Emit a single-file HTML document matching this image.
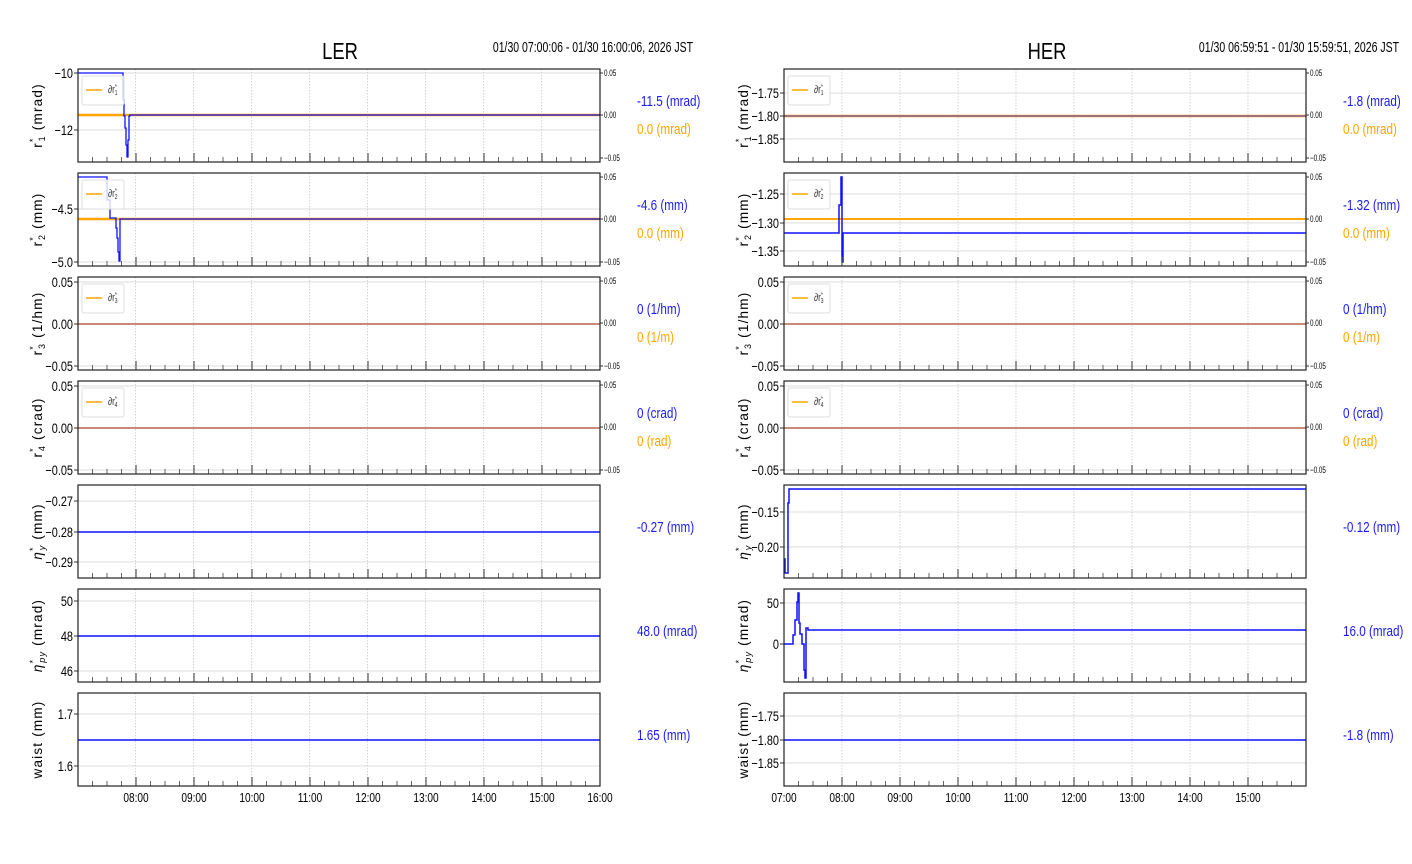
<!DOCTYPE html>
<html><head><meta charset="utf-8"><style>
html,body{margin:0;padding:0;background:#fff;width:1412px;height:864px;overflow:hidden}
svg text{font-family:"Liberation Sans Narrow","Liberation Sans",sans-serif}
</style></head><body>
<svg id="s" width="1412" height="864" xmlns="http://www.w3.org/2000/svg">
<text x="340" y="59" font-size="23" text-anchor="middle" transform="translate(340 0) scale(0.8 1) translate(-340 0)">LER</text>
<text x="1047" y="59" font-size="23" text-anchor="middle" transform="translate(1047 0) scale(0.8 1) translate(-1047 0)">HER</text>
<text x="693" y="52" font-size="15" text-anchor="end" transform="translate(693 0) scale(0.7 1) translate(-693 0)">01/30 07:00:06 - 01/30 16:00:06, 2026 JST</text>
<text x="1399" y="52" font-size="15" text-anchor="end" transform="translate(1399 0) scale(0.7 1) translate(-1399 0)">01/30 06:59:51 - 01/30 15:59:51, 2026 JST</text>
</svg>
<script>
const s=document.getElementById('s');
let h='';
const H=93,W=522;
function T(x,y,t,sz,anc,col,sc){sc=sc||0.78;return `<text x="${x}" y="${y}" font-size="${sz}" fill="${col||'#000'}" text-anchor="${anc||'start'}" transform="translate(${x} 0) scale(${sc} 1) translate(${-x} 0)">${t}</text>`;}
function panel(x0,y0,yt,left,rightAx,lines,legend,ylab,vals){
  const x1=x0+W,y1=y0+H;
  for(let k=1;k<=9;k++){const gx=x0+58*k-(left?0.5:0);if(gx<x1-1)h+=`<line x1="${gx}" y1="${y0}" x2="${gx}" y2="${y1}" stroke="#c8c8c8" stroke-width="0.8" stroke-dasharray="1.5,1.5"/>`;}
  yt.forEach(([y,l])=>{h+=`<line x1="${x0}" y1="${y}" x2="${x1}" y2="${y}" stroke="#d0d0d0" stroke-width="0.8"/>`;h+=`<line x1="${x0}" y1="${y}" x2="${x0-4}" y2="${y}" stroke="#333"/>`;h+=T(x0-5,y+5,l,14,'end');});
  lines.forEach(([d,c,w])=>{h+=`<path d="${d}" fill="none" stroke="${c}" stroke-width="${w||1.5}"/>`;});
  for(let k=1;k<36;k++){const tx=x0+14.5*k;const maj=k%4==0;h+=`<line x1="${tx}" y1="${y1}" x2="${tx}" y2="${y1-(maj?9:5)}" stroke="#555" stroke-width="${maj?1.2:0.9}"/>`;}
  h+=`<rect x="${x0}" y="${y0}" width="${W}" height="${H}" fill="none" stroke="#222" stroke-width="1.2"/>`;
  if(rightAx){[[y0+4,'0.05'],[y0+46,'0.00'],[y0+89,'\u22120.05']].forEach(([y,l])=>{h+=`<line x1="${x1}" y1="${y}" x2="${x1+3}" y2="${y}" stroke="#333"/>`;h+=T(x1+4,y+3,l,9,'start','#000',0.7);});}
  if(legend){h+=`<rect x="${x0+4}" y="${y0+7}" width="42" height="29" rx="2" fill="#fff" fill-opacity="0.8" stroke="#ddd"/><line x1="${x0+8}" y1="${y0+21}" x2="${x0+24}" y2="${y0+21}" stroke="orange" stroke-width="1.5"/>`;h+=T(x0+30,y0+24,legend,11,'start','#333',0.75);}
  const cy=y0+H/2;
  h+=`<text x="0" y="0" font-size="13.5" text-anchor="middle" letter-spacing="1.2" transform="translate(${x0-36} ${cy}) rotate(-90)">${ylab}</text>`;
  const lx=x1+37;
  if(vals.length==2){h+=T(lx,y0+37,vals[0],15,'start','#1a1aff');h+=T(lx,y0+65,vals[1],15,'start','#ffa500');}
  else h+=T(lx,y0+47,vals[0],15,'start','#1a1aff');
}
const L=78,R=784,B='#1010ff',O='orange';
function yl(base,sub,unit,ital){return `<tspan ${ital?'font-style="italic"':''}>${base}</tspan><tspan font-size="9" dy="-6">*</tspan><tspan font-size="9" dy="9" dx="-4" ${ital?'font-style="italic"':''}>${sub}</tspan><tspan dy="-3">  (${unit})</tspan>`;}
function lg(n){return `∂r<tspan font-size="7" dy="-4">*</tspan><tspan font-size="7" dy="6" dx="-3">${n}</tspan>`;}
panel(L,69,[[73,'\u221210'],[130,'\u221212']],1,1,[[`M78,115H600`,O,2.5],[`M78,73H123V100H124V116H125V128H126V145H127V157H128V140H129V116H130V115H600`,B,1.3]],lg(1),yl('r','1','mrad'),['-11.5 (mrad)','0.0 (mrad)']);
panel(L,173,[[209,'\u22124.5'],[262,'\u22125.0']],1,1,[[`M78,219H600`,O,2.5],[`M78,177H107V200H110V218H116V228H117V238H118V252H119V261H120V219H600`,B,1.3]],lg(2),yl('r','2','mm'),['-4.6 (mm)','0.0 (mm)']);
panel(L,277,[[282,'0.05'],[324,'0.00'],[366,'\u22120.05']],1,1,[[`M78,324H600`,'#c98a7a',2]],lg(3),yl('r','3','1/hm'),['0 (1/hm)','0 (1/m)']);
panel(L,381,[[386,'0.05'],[428,'0.00'],[470,'\u22120.05']],1,1,[[`M78,428H600`,'#c98a7a',2]],lg(4),yl('r','4','crad'),['0 (crad)','0 (rad)']);
panel(L,485,[[501,'\u22120.27'],[532,'\u22120.28'],[562,'\u22120.29']],1,0,[[`M78,532H600`,B,1.5]],null,yl('η','y','mm',1),['-0.27 (mm)']);
panel(L,589,[[601,'50'],[636,'48'],[671,'46']],1,0,[[`M78,636H600`,B,1.5]],null,yl('η','py','mrad',1),['48.0 (mrad)']);
panel(L,693,[[714,'1.7'],[766,'1.6']],1,0,[[`M78,740H600`,B,1.5]],null,'waist (mm)',['1.65 (mm)']);
panel(R,69,[[93,'\u22121.75'],[116,'\u22121.80'],[139,'\u22121.85']],0,1,[[`M784,116H1306`,O,2.5],[`M784,116H1306`,'#4040ff',1]],lg(1),yl('r','1','mrad'),['-1.8 (mrad)','0.0 (mrad)']);
panel(R,173,[[194,'\u22121.25'],[223,'\u22121.30'],[251,'\u22121.35']],0,1,[[`M784,219H1306`,O,2],[`M784,233H839V205H841V177H842V262H843V233H1306`,B,1.5]],lg(2),yl('r','2','mm'),['-1.32 (mm)','0.0 (mm)']);
panel(R,277,[[282,'0.05'],[324,'0.00'],[366,'\u22120.05']],0,1,[[`M784,324H1306`,'#c98a7a',2]],lg(3),yl('r','3','1/hm'),['0 (1/hm)','0 (1/m)']);
panel(R,381,[[386,'0.05'],[428,'0.00'],[470,'\u22120.05']],0,1,[[`M784,428H1306`,'#c98a7a',2]],lg(4),yl('r','4','crad'),['0 (crad)','0 (rad)']);
panel(R,485,[[512,'\u22120.15'],[547,'\u22120.20']],0,0,[[`M784,559H785V573H788V503H789V489H1306`,B,1.5]],null,yl('η','y','mm',1),['-0.12 (mm)']);
panel(R,589,[[603,'50'],[644,'0']],0,0,[[`M784,644H793V635H795V620H797V602H798V593H799V623H800V634H802V644H804V670H805V678H806V628H808V630H1306`,B,1.5]],null,yl('η','py','mrad',1),['16.0 (mrad)']);
panel(R,693,[[716,'\u22121.75'],[740,'\u22121.80'],[763,'\u22121.85']],0,0,[[`M784,740H1306`,B,1.5]],null,'waist (mm)',['-1.8 (mm)']);
for(let k=1;k<=9;k++)h+=T(136+58*(k-1),802,String(7+k).padStart(2,'0')+':00',13,'middle');
for(let k=0;k<=8;k++)h+=T(784+58*k,802,String(7+k).padStart(2,'0')+':00',13,'middle');
s.insertAdjacentHTML('beforeend',h);
</script>
</body></html>
